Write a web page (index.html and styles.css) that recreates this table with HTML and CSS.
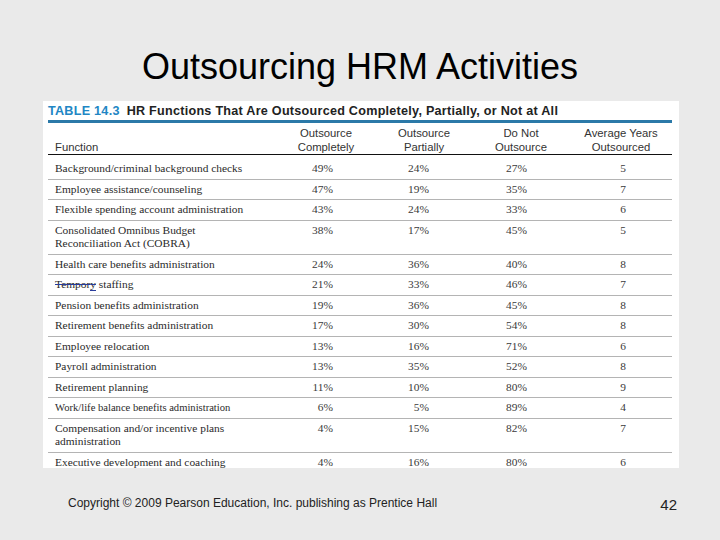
FILE: index.html
```html
<!DOCTYPE html>
<html>
<head>
<meta charset="utf-8">
<link rel="stylesheet" href="styles.css">
</head>
<body>
<div class="slide">
  <h1 class="title">Outsourcing HRM Activities</h1>
  <div class="panel">
    <div class="caption"><span class="tno">TABLE 14.3</span><span class="ctext">HR Functions That Are Outsourced Completely, Partially, or Not at All</span></div>
    <table class="data">
      <colgroup>
        <col class="c-fn"><col class="c-a"><col class="c-b"><col class="c-c"><col class="c-d">
      </colgroup>
      <thead>
        <tr>
          <th class="fn">Function</th>
          <th>Outsource<br>Completely</th>
          <th>Outsource<br>Partially</th>
          <th>Do Not<br>Outsource</th>
          <th>Average Years<br>Outsourced</th>
        </tr>
      </thead>
      <tbody>
        <tr class="first"><td>Background/criminal background checks</td><td class="n">49%</td><td class="n">24%</td><td class="n">27%</td><td class="y">5</td></tr>
        <tr><td>Employee assistance/counseling</td><td class="n">47%</td><td class="n">19%</td><td class="n">35%</td><td class="y">7</td></tr>
        <tr><td>Flexible spending account administration</td><td class="n">43%</td><td class="n">24%</td><td class="n">33%</td><td class="y">6</td></tr>
        <tr><td>Consolidated Omnibus Budget<br>Reconciliation Act (COBRA)</td><td class="n">38%</td><td class="n">17%</td><td class="n">45%</td><td class="y">5</td></tr>
        <tr><td>Health care benefits administration</td><td class="n">24%</td><td class="n">36%</td><td class="n">40%</td><td class="y">8</td></tr>
        <tr><td><span class="strike">Tempor<span class="mark">y</span></span> staffing</td><td class="n">21%</td><td class="n">33%</td><td class="n">46%</td><td class="y">7</td></tr>
        <tr><td>Pension benefits administration</td><td class="n">19%</td><td class="n">36%</td><td class="n">45%</td><td class="y">8</td></tr>
        <tr><td>Retirement benefits administration</td><td class="n">17%</td><td class="n">30%</td><td class="n">54%</td><td class="y">8</td></tr>
        <tr><td>Employee relocation</td><td class="n">13%</td><td class="n">16%</td><td class="n">71%</td><td class="y">6</td></tr>
        <tr><td>Payroll administration</td><td class="n">13%</td><td class="n">35%</td><td class="n">52%</td><td class="y">8</td></tr>
        <tr><td>Retirement planning</td><td class="n">11%</td><td class="n">10%</td><td class="n">80%</td><td class="y">9</td></tr>
        <tr><td class="small">Work/life balance benefits administration</td><td class="n">6%</td><td class="n">5%</td><td class="n">89%</td><td class="y">4</td></tr>
        <tr><td>Compensation and/or incentive plans<br>administration</td><td class="n">4%</td><td class="n">15%</td><td class="n">82%</td><td class="y">7</td></tr>
        <tr class="last"><td>Executive development and coaching</td><td class="n">4%</td><td class="n">16%</td><td class="n">80%</td><td class="y">6</td></tr>
      </tbody>
    </table>
  </div>
  <div class="footer">
    <span class="copy">Copyright © 2009 Pearson Education, Inc. publishing as Prentice Hall</span>
    <span class="page">42</span>
  </div>
</div>
</body>
</html>
```

FILE: styles.css
```css
html, body {
  margin: 0;
  padding: 0;
}
body {
  background: #eaeaea;
  font-family: "Liberation Sans", Arial, sans-serif;
}
.slide {
  width: 720px;
  height: 540px;
  overflow: hidden;
}
.title {
  margin: 0;
  padding-top: 47px;
  font-size: 36px;
  line-height: 40px;
  font-weight: normal;
  text-align: center;
  color: #000;
}
.panel {
  margin: 14px 0 0 43px;
  width: 636px;
  height: 367px;
  background: #fff;
  overflow: hidden;
  padding: 2px 7px 0 5px;
  box-sizing: border-box;
}
.caption {
  font-size: 12.6px;
  font-weight: bold;
  line-height: 16px;
  letter-spacing: 0.26px;
  color: #222;
  padding-bottom: 1px;
  border-bottom: 3px solid #2b79a8;
  white-space: nowrap;
}
.tno {
  color: #2186c4;
  margin-right: 7px;
}
.data {
  width: 624px;
  border-collapse: collapse;
  table-layout: fixed;
}
.c-fn { width: 228px; }
.c-a { width: 100px; }
.c-b { width: 96px; }
.c-c { width: 98px; }
.c-d { width: 102px; }
.data th {
  font-family: "Liberation Sans", Arial, sans-serif;
  font-weight: normal;
  font-size: 11.3px;
  line-height: 14px;
  color: #333;
  text-align: center;
  vertical-align: bottom;
  padding: 3px 0 0;
  border-bottom: 1px solid #111;
}
.data th.fn {
  text-align: left;
  padding-left: 7px;
}
.data td {
  font-family: "Liberation Serif", "Times New Roman", serif;
  font-size: 11.4px;
  line-height: 13.5px;
  color: #2a2a2a;
  padding: 3px 0;
  vertical-align: top;
  border-bottom: 1px solid #b4b4b4;
  white-space: nowrap;
}
.data td:first-child {
  padding-left: 7px;
}
.data td.small {
  font-size: 10.6px;
}
.data tr.first td {
  padding-top: 7px;
}
.data tr.last td {
  border-bottom: none;
}
.data td.n {
  text-align: right;
  padding-right: 43px;
  color: #3a3a3a;
}
.data td.y {
  text-align: center;
  padding-left: 4px;
  color: #3a3a3a;
}
.strike {
  text-decoration: line-through;
  text-decoration-color: #2a3d9c;
  color: #2a2a2a;
}
.mark {
  border-bottom: 1.5px solid #2a3d9c;
}
.footer {
  display: flex;
  justify-content: space-between;
  align-items: center;
  padding: 25px 43px 0 68px;
}
.copy {
  font-size: 12px;
  color: #222;
}
.page {
  font-size: 15px;
  color: #222;
  padding-top: 3px;
}
```
